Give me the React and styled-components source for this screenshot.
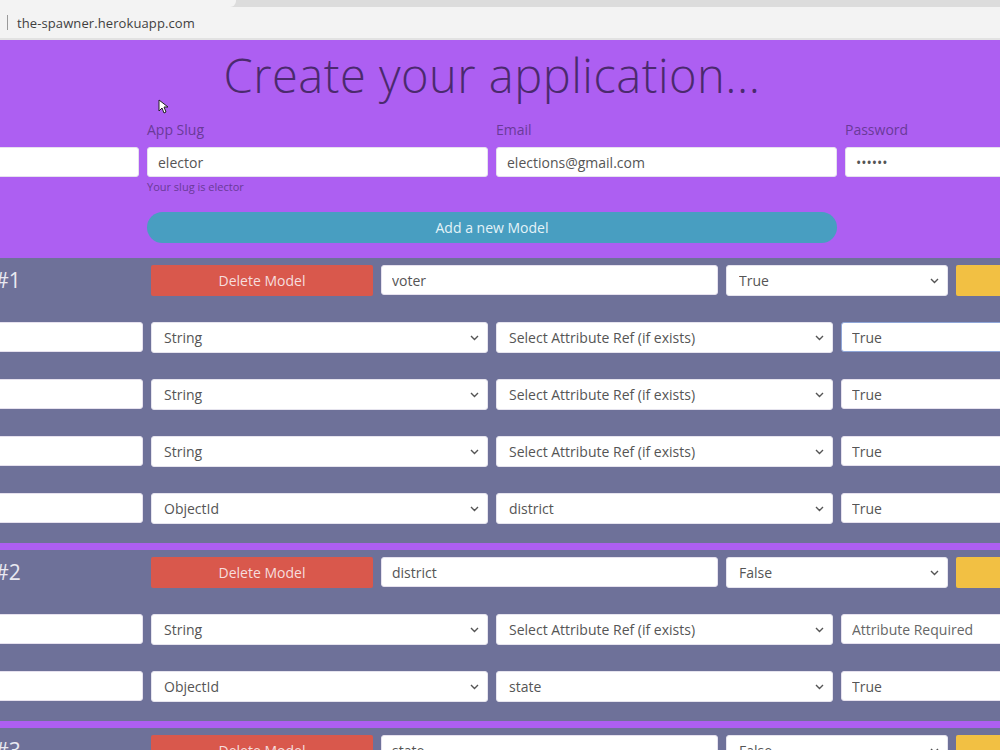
import React from "react";
import styled, { createGlobalStyle } from "styled-components";

const GlobalStyle = createGlobalStyle`
  html, body {
    margin: 0;
    padding: 0;
    overflow: hidden;
    background: #6e7199;
  }
  body {
    font-family: "Open Sans", "Noto Sans", "Liberation Sans", sans-serif;
  }
  * { box-sizing: border-box; }
`;

const models = [
  {
    name: "voter",
    timestamps: "True",
    attributes: [
      { name: "name", type: "String", ref: "", required: "True" },
      { name: "email", type: "String", ref: "", required: "True" },
      { name: "address", type: "String", ref: "", required: "True" },
      { name: "district", type: "ObjectId", ref: "district", required: "True" },
    ],
  },
  {
    name: "district",
    timestamps: "False",
    attributes: [
      { name: "name", type: "String", ref: "", required: "" },
      { name: "state", type: "ObjectId", ref: "state", required: "True" },
    ],
  },
  {
    name: "state",
    timestamps: "False",
    attributes: [],
  },
];

const Browser = styled.div`
  background: #f3f3f3;
  border-bottom: 2px solid #e2e2e2;
`;

const TabStrip = styled.div`
  height: 7px;
  display: flex;
  background: #dcdcdc;
`;

const ActiveTab = styled.div`
  width: 236px;
  background: #f3f3f3;
  border-bottom-right-radius: 6px;
`;

const AddressBar = styled.div`
  height: 31px;
  display: flex;
  align-items: center;
  padding-left: 7px;
  gap: 9px;
`;

const Caret = styled.span`
  width: 1px;
  height: 15px;
  background: #9a9a9a;
`;

const Url = styled.span`
  font-size: 13px;
  color: #3f3f3f;
  letter-spacing: 0.1px;
`;

const Page = styled.div`
  width: 1388px;
  margin-left: -202px;
`;

const Header = styled.header`
  position: relative;
  background: #ad5ff2;
  padding: 8px 0 15px;
`;

const Title = styled.h1`
  margin: 0 0 18px;
  text-align: center;
  font-weight: 300;
  font-size: 47px;
  line-height: 54px;
  color: #4b2a6e;
  letter-spacing: 0.5px;
`;

const FormGrid = styled.div`
  display: grid;
  grid-template-columns: repeat(4, 341px);
  column-gap: 8px;
`;

const Field = styled.div`
  display: flex;
  flex-direction: column;
`;

const Label = styled.label`
  font-size: 14px;
  line-height: 20px;
  color: #6a3a98;
  margin-bottom: 7px;
`;

const TextInput = styled.input`
  height: 30px;
  width: 100%;
  border: 1px solid ${(p) => (p.$focused ? "#8fa6d8" : "#e6e1ee")};
  border-radius: 3px;
  background: #fff;
  padding: 0 10px;
  font-family: inherit;
  font-size: 14px;
  color: #555;
  outline: none;
  &::placeholder {
    color: #666;
  }
`;

const Hint = styled.small`
  font-size: 11px;
  line-height: 16px;
  margin-top: 2px;
  color: #6a3a98;
`;

const AddModel = styled.button`
  grid-column: 2 / 4;
  height: 31px;
  margin-top: 17px;
  border: none;
  border-radius: 16px;
  background: #489ec1;
  color: #e4f3f8;
  font-family: inherit;
  font-size: 14px;
`;

const Model = styled.section`
  background: #6e7199;
  padding: 7px 8px 19px;
  border-bottom: 7px solid #ad5ff2;
  display: flex;
  flex-direction: column;
  gap: 26px;
`;

const ModelRow = styled.div`
  display: grid;
  grid-template-columns: 337px 222px 337px 222px 222px;
  column-gap: 8px;
  height: 31px;
`;

const AttrRow = styled.div`
  display: grid;
  grid-template-columns: repeat(4, 337px);
  column-gap: 8px;
  height: 31px;
`;

const ModelTitle = styled.h2`
  margin: 0;
  text-align: center;
  font-weight: 400;
  font-size: 21px;
  line-height: 31px;
  color: #e9e9f1;
`;

const Button = styled.button`
  border: none;
  border-radius: 2px;
  background: ${(p) => p.$bg};
  color: ${(p) => p.$color};
  font-family: inherit;
  font-size: 14px;
`;

const SelectWrap = styled.div`
  position: relative;
`;

const Select = styled.select`
  appearance: none;
  -webkit-appearance: none;
  height: 100%;
  width: 100%;
  border: 1px solid #e6e4ee;
  border-radius: 3px;
  background: #fff;
  padding: 0 12px;
  font-family: inherit;
  font-size: 14px;
  color: #555;
  outline: none;
`;

const Chevron = styled.svg`
  position: absolute;
  right: 9px;
  top: 50%;
  margin-top: -3px;
  pointer-events: none;
`;

const Cursor = styled.svg`
  position: absolute;
  left: 360px;
  top: 59px;
`;

const Dropdown = ({ value }) => (
  <SelectWrap>
    <Select value={value} onChange={() => {}}>
      <option value={value}>{value}</option>
    </Select>
    <Chevron width="9" height="6" viewBox="0 0 9 6">
      <path d="M1 1l3.5 3.5L8 1" fill="none" stroke="#555" strokeWidth="1.4" />
    </Chevron>
  </SelectWrap>
);

const ModelBlock = ({ model, index }) => (
  <Model>
    <ModelRow>
      <ModelTitle>Model #{index + 1}</ModelTitle>
      <Button $bg="#d9584c" $color="#f6dede">
        Delete Model
      </Button>
      <TextInput defaultValue={model.name} />
      <Dropdown value={model.timestamps} />
      <Button $bg="#f2c043" $color="#fff">
        Add Attribute
      </Button>
    </ModelRow>
    {model.attributes.map((attr, i) => (
      <AttrRow key={i}>
        <TextInput defaultValue={attr.name} />
        <Dropdown value={attr.type} />
        <Dropdown value={attr.ref || "Select Attribute Ref (if exists)"} />
        <TextInput
          $focused={index === 0 && i === 0}
          defaultValue={attr.required}
          placeholder="Attribute Required"
        />
      </AttrRow>
    ))}
  </Model>
);

export default function App() {
  return (
    <>
      <GlobalStyle />
      <Browser>
        <TabStrip>
          <ActiveTab />
        </TabStrip>
        <AddressBar>
          <Caret />
          <Url>the-spawner.herokuapp.com</Url>
        </AddressBar>
      </Browser>
      <Page>
        <Header>
          <Title>Create your application...</Title>
          <FormGrid>
            <Field>
              <Label>App Name</Label>
              <TextInput defaultValue="Elector" />
            </Field>
            <Field>
              <Label>App Slug</Label>
              <TextInput defaultValue="elector" />
              <Hint>Your slug is elector</Hint>
            </Field>
            <Field>
              <Label>Email</Label>
              <TextInput defaultValue="elections@gmail.com" />
            </Field>
            <Field>
              <Label>Password</Label>
              <TextInput type="password" defaultValue="secret" />
            </Field>
            <AddModel>Add a new Model</AddModel>
          </FormGrid>
          <Cursor width="10" height="15" viewBox="0 0 10 15">
            <path d="M1 1v11l3-3 2 5 2-1-2-5h4z" fill="#fff" stroke="#222" strokeWidth="1" />
          </Cursor>
        </Header>
        {models.map((m, i) => (
          <ModelBlock key={i} model={m} index={i} />
        ))}
      </Page>
    </>
  );
}
